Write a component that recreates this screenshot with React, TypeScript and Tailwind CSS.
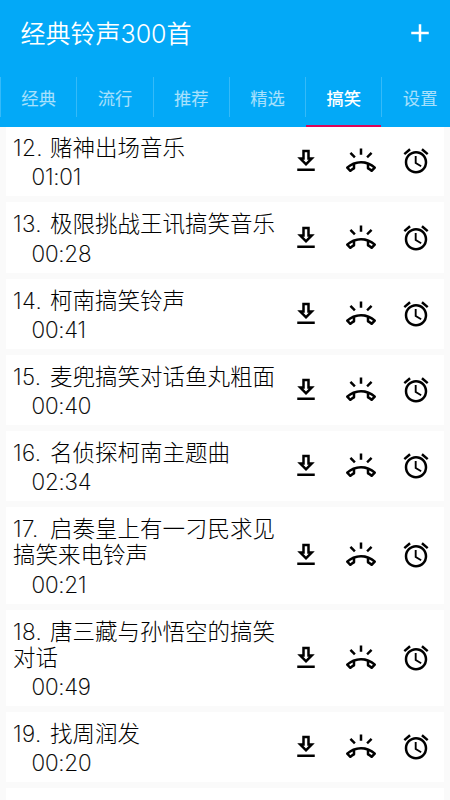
import { MdAdd, MdAlarm, MdOutlineDownload, MdOutlineRingVolume } from 'react-icons/md';

interface Ringtone {
  no: number;
  lines: string[];
  duration: string;
}

const TABS = ['经典', '流行', '推荐', '精选', '搞笑', '设置'];

const RINGTONES: Ringtone[] = [
  { no: 12, lines: ['赌神出场音乐'], duration: '01:01' },
  { no: 13, lines: ['极限挑战王讯搞笑音乐'], duration: '00:28' },
  { no: 14, lines: ['柯南搞笑铃声'], duration: '00:41' },
  { no: 15, lines: ['麦兜搞笑对话鱼丸粗面'], duration: '00:40' },
  { no: 16, lines: ['名侦探柯南主题曲'], duration: '02:34' },
  { no: 17, lines: ['启奏皇上有一刁民求见', '搞笑来电铃声'], duration: '00:21' },
  { no: 18, lines: ['唐三藏与孙悟空的搞笑', '对话'], duration: '00:49' },
  { no: 19, lines: ['找周润发'], duration: '00:20' },
];

function RingtoneCard({ item }: { item: Ringtone }) {
  return (
    <li className="flex shrink-0 items-center bg-white pt-[9px] pr-[13px] pb-[6px] pl-[7px]">
      <div className="min-w-0 flex-1 font-light whitespace-nowrap text-black">
        <p className="text-[22.5px] leading-[26.2px]">
          <span className="inline-block w-[37px] font-extralight tracking-[0.4px] [-webkit-text-stroke:0.2px]">
            {item.no}.
          </span>
          {item.lines.map((line) => (
            <span key={line}>
              {line}
              <br />
            </span>
          ))}
        </p>
        <p className="mt-[2px] pl-[18.5px] text-[22.5px] leading-[27px] font-extralight tracking-[-0.2px] [-webkit-text-stroke:0.2px]">
          {item.duration}
        </p>
      </div>
      <div className="-mt-[3px] flex gap-[25px] text-[30px] text-black">
        <MdOutlineDownload />
        <MdOutlineRingVolume />
        <MdAlarm />
      </div>
    </li>
  );
}

export default function App() {
  return (
    <div className="flex h-[800px] w-[450px] flex-col overflow-hidden bg-[#fafafa] font-['Inter','Noto_Sans_CJK_SC',sans-serif]">
      <header className="z-10 shrink-0 bg-[#03a9f7] text-white">
        <div className="flex h-[68px] items-center justify-between pr-[15px] pl-[20.5px]">
          <h1 className="text-[25px] leading-[30px] font-[350]">经典铃声300首</h1>
          <MdAdd className="-mt-[2px] text-[30px]" />
        </div>
        <nav className="flex h-[59px] overflow-hidden">
          {TABS.map((tab) => (
            <div
              key={tab}
              className={`relative flex w-[76.3px] shrink-0 items-center justify-center pt-[2px] pl-[1px] text-[17.3px] ${tab === '搞笑' ? 'font-medium text-white' : 'font-normal text-white/65'}`}
            >
              <span className="absolute top-[9px] left-0 h-[40px] w-px bg-white/20" />
              {tab}
              {tab === '搞笑' && <span className="absolute bottom-0 left-[0.8px] h-[2px] w-[75px] bg-[#dc0459]" />}
            </div>
          ))}
        </nav>
      </header>
      <ul className="-mt-[0.8px] flex flex-col gap-[6px] px-[6px]">
        {RINGTONES.map((item) => (
          <RingtoneCard key={item.no} item={item} />
        ))}
        <li className="h-[70px] shrink-0 bg-white" />
      </ul>
    </div>
  );
}
